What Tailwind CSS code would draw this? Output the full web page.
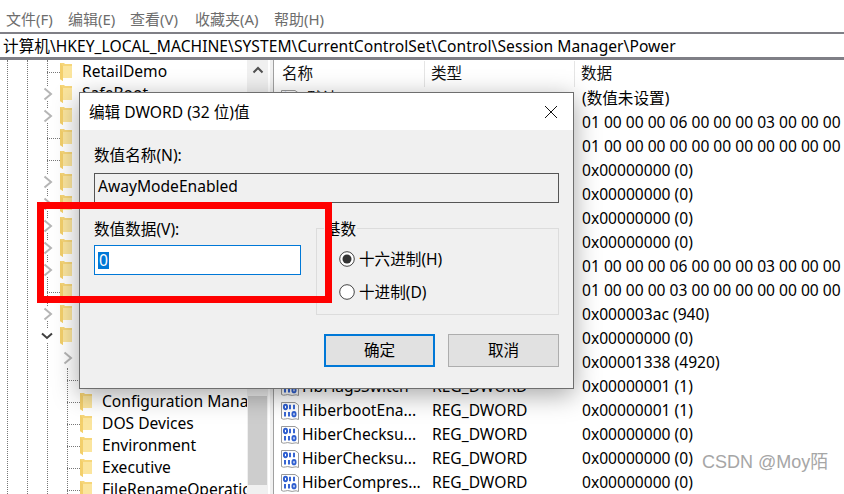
<!DOCTYPE html>
<html lang="zh-CN">
<head>
<meta charset="utf-8">
<script src="https://cdn.jsdelivr.net/npm/@tailwindcss/browser@4"></script>
</head>
<body class="bg-white">
<svg width="0" height="0" class="absolute">
  <symbol id="fd" viewBox="0 0 12 18">
    <path d="M0 0H4L5 1H12V15H3V18L0 16Z" fill="#f6d67a"/>
    <path d="M3 3H12V15H3Z" fill="#fbe59e"/>
    <path d="M0 0L3 3V18L0 16Z" fill="#f3cf6b"/>
  </symbol>
  <symbol id="rg" viewBox="0 0 20 20">
    <path d="M1.500 1.500H15L18.500 4V18.500C15 16.500 13 19.500 10 18C7 16.500 4 19.500 1.500 17.500Z" fill="#fff" stroke="#9a9a9a"/>
    <g fill="none" stroke="#2f5fd0" stroke-width="1.900">
      <ellipse cx="5.500" cy="6" rx="1.600" ry="2.200"/>
      <path d="M10 3.800V8.200M14 3.800V8.200M5 11V15.500M9 11V15.500"/>
      <ellipse cx="14" cy="13.200" rx="1.600" ry="2.200"/>
    </g>
  </symbol>
  <symbol id="cr" viewBox="0 0 12 14"><path d="M2.500 1.500L9 7L2.500 12.500" fill="none" stroke="#b5b5b5" stroke-width="2"/></symbol>
</svg>
<div class="relative w-[844px] h-[494px] overflow-hidden flex flex-col text-[15.600px] text-black bg-white font-['Noto_Sans','Noto_Sans_CJK_SC',sans-serif]">
  <nav class="h-[32px] shrink-0 flex items-center pt-[6px] text-[#6d6d6d] text-[15px] pl-[6px]">
    <span class="w-[62px]">文件(F)</span><span class="w-[62px]">编辑(E)</span><span class="w-[65px]">查看(V)</span><span class="w-[79px]">收藏夹(A)</span><span>帮助(H)</span>
  </nav>
  <div class="h-[28px] shrink-0 border-t-2 border-b-[3px] border-[#7f7f86] flex items-center pl-[3px] pt-[2px] tracking-[0.04px] whitespace-nowrap">计算机\HKEY_LOCAL_MACHINE\SYSTEM\CurrentControlSet\Control\Session Manager\Power</div>
  <main class="flex-1 flex min-h-0">
    <section class="w-[270px] shrink-0 flex">
      <div class="relative w-[247px] pt-[1px] overflow-hidden whitespace-nowrap">
        <div class="absolute left-[7px] top-0 bottom-0 border-l border-dotted border-[#777]"></div>
        <div class="absolute left-[27px] top-0 bottom-0 border-l border-dotted border-[#777]"></div>
        <div class="absolute left-[47px] top-0 bottom-0 border-l border-dotted border-[#777]"></div>
        <div class="absolute left-[67px] top-[308px] bottom-0 border-l border-dotted border-[#777]"></div>

        <div class="relative h-[22px] flex items-center pl-[47px]"><span class="shrink-0 w-[13px] border-t border-dotted border-[#777]"></span><svg class="shrink-0 w-[12px] h-[18px]"><use href="#fd"/></svg><span class="ml-[10px]">RetailDemo</span></div>
        <div class="relative h-[22px] flex items-center pl-[42px]"><svg class="shrink-0 w-[12px] h-[14px] mr-[6px] bg-white"><use href="#cr"/></svg><svg class="shrink-0 w-[12px] h-[18px]"><use href="#fd"/></svg><span class="ml-[10px]">SafeBoot</span></div>
        <div class="relative h-[22px] flex items-center pl-[42px]"><svg class="shrink-0 w-[12px] h-[14px] mr-[6px] bg-white"><use href="#cr"/></svg><svg class="shrink-0 w-[12px] h-[18px]"><use href="#fd"/></svg></div>
        <div class="relative h-[22px] flex items-center pl-[47px]"><span class="shrink-0 w-[13px] border-t border-dotted border-[#777]"></span><svg class="shrink-0 w-[12px] h-[18px]"><use href="#fd"/></svg></div>
        <div class="relative h-[22px] flex items-center pl-[47px]"><span class="shrink-0 w-[13px] border-t border-dotted border-[#777]"></span><svg class="shrink-0 w-[12px] h-[18px]"><use href="#fd"/></svg></div>
        <div class="relative h-[22px] flex items-center pl-[42px]"><svg class="shrink-0 w-[12px] h-[14px] mr-[6px] bg-white"><use href="#cr"/></svg><svg class="shrink-0 w-[12px] h-[18px]"><use href="#fd"/></svg></div>
        <div class="relative h-[22px] flex items-center pl-[42px]"><svg class="shrink-0 w-[12px] h-[14px] mr-[6px] bg-white"><use href="#cr"/></svg><svg class="shrink-0 w-[12px] h-[18px]"><use href="#fd"/></svg></div>
        <div class="relative h-[22px] flex items-center pl-[42px]"><svg class="shrink-0 w-[12px] h-[14px] mr-[6px] bg-white"><use href="#cr"/></svg><svg class="shrink-0 w-[12px] h-[18px]"><use href="#fd"/></svg></div>
        <div class="relative h-[22px] flex items-center pl-[42px]"><svg class="shrink-0 w-[12px] h-[14px] mr-[6px] bg-white"><use href="#cr"/></svg><svg class="shrink-0 w-[12px] h-[18px]"><use href="#fd"/></svg></div>
        <div class="relative h-[22px] flex items-center pl-[42px]"><svg class="shrink-0 w-[12px] h-[14px] mr-[6px] bg-white"><use href="#cr"/></svg><svg class="shrink-0 w-[12px] h-[18px]"><use href="#fd"/></svg></div>
        <div class="relative h-[22px] flex items-center pl-[47px]"><span class="shrink-0 w-[13px] border-t border-dotted border-[#777]"></span><svg class="shrink-0 w-[12px] h-[18px]"><use href="#fd"/></svg></div>
        <div class="relative h-[22px] flex items-center pl-[42px]"><svg class="shrink-0 w-[12px] h-[14px] mr-[6px] bg-white"><use href="#cr"/></svg><svg class="shrink-0 w-[12px] h-[18px]"><use href="#fd"/></svg></div>
        <div class="relative h-[22px] flex items-center pl-[41px]"><svg class="shrink-0 w-[12px] h-[14px] mr-[7px] bg-white" viewBox="0 0 12 14"><path d="M1 4.500L6 9L11 4.500" fill="none" stroke="#404040" stroke-width="2"/></svg><svg class="shrink-0 w-[12px] h-[18px]"><use href="#fd"/></svg></div>
        <div class="relative h-[22px] flex items-center pl-[62px]"><svg class="shrink-0 w-[12px] h-[14px] bg-white"><use href="#cr"/></svg></div>
        <div class="relative h-[22px] flex items-center pl-[67px]"><span class="shrink-0 w-[13px] border-t border-dotted border-[#777]"></span><svg class="shrink-0 w-[12px] h-[18px]"><use href="#fd"/></svg><span class="ml-[10px]">AppCompatCache</span></div>
        <div class="relative h-[22px] flex items-center pl-[67px]"><span class="shrink-0 w-[13px] border-t border-dotted border-[#777]"></span><svg class="shrink-0 w-[12px] h-[18px]"><use href="#fd"/></svg><span class="ml-[10px]">Configuration Manager</span></div>
        <div class="relative h-[22px] flex items-center pl-[67px]"><span class="shrink-0 w-[13px] border-t border-dotted border-[#777]"></span><svg class="shrink-0 w-[12px] h-[18px]"><use href="#fd"/></svg><span class="ml-[10px]">DOS Devices</span></div>
        <div class="relative h-[22px] flex items-center pl-[67px]"><span class="shrink-0 w-[13px] border-t border-dotted border-[#777]"></span><svg class="shrink-0 w-[12px] h-[18px]"><use href="#fd"/></svg><span class="ml-[10px]">Environment</span></div>
        <div class="relative h-[22px] flex items-center pl-[67px]"><span class="shrink-0 w-[13px] border-t border-dotted border-[#777]"></span><svg class="shrink-0 w-[12px] h-[18px]"><use href="#fd"/></svg><span class="ml-[10px]">Executive</span></div>
        <div class="relative h-[22px] flex items-center pl-[67px]"><span class="shrink-0 w-[13px] border-t border-dotted border-[#777]"></span><svg class="shrink-0 w-[12px] h-[18px]"><use href="#fd"/></svg><span class="ml-[10px]">FileRenameOperations</span></div>
      </div>
      <div class="w-[21px] bg-[#f0f0f0] flex flex-col items-center">
        <svg class="w-[12px] h-[8px] mt-[6px]" viewBox="0 0 12 8"><path d="M1.500 6.500L6 2L10.500 6.500" fill="none" stroke="#505050" stroke-width="2"/></svg>
        <div class="w-[19px] h-[89px] mt-[322px] bg-[#cdcdcd]"></div>
      </div>
      <div class="w-[2px]"></div>
    </section>
    <div class="w-[4px] shrink-0 bg-[#f0f0f0] border-r border-[#a0a0a0]"></div>
    <section class="flex-1 min-w-0 pt-[1px] whitespace-nowrap">
      <div class="h-[26px] flex items-center text-[#111]">
        <div class="w-[151px] pl-[8px] border-r border-[#e5e5e5] h-full flex items-center">名称</div>
        <div class="w-[150px] pl-[6px] border-r border-[#e5e5e5] h-full flex items-center">类型</div>
        <div class="pl-[6px]">数据</div>
      </div>
      <div class="h-[24px] grid grid-cols-[151px_150px_1fr] items-center"><div class="flex items-center pl-[6px] gap-[2px]"><svg class="w-[20px] h-[20px]"><use href="#rg"/></svg>(默认)</div><div class="pl-[7px]">REG_SZ</div><div class="pl-[7px]">(数值未设置)</div></div>
      <div class="h-[24px] grid grid-cols-[151px_150px_1fr] items-center"><div></div><div></div><div class="pl-[7px] overflow-hidden">01 00 00 00 06 00 00 00 03 00 00 00 00 00</div></div>
      <div class="h-[24px] grid grid-cols-[151px_150px_1fr] items-center"><div></div><div></div><div class="pl-[7px] overflow-hidden">01 00 00 00 00 00 00 00 00 00 00 00 00 00</div></div>
      <div class="h-[24px] grid grid-cols-[151px_150px_1fr] items-center"><div></div><div></div><div class="pl-[7px]">0x00000000 (0)</div></div>
      <div class="h-[24px] grid grid-cols-[151px_150px_1fr] items-center"><div></div><div></div><div class="pl-[7px]">0x00000000 (0)</div></div>
      <div class="h-[24px] grid grid-cols-[151px_150px_1fr] items-center"><div></div><div></div><div class="pl-[7px]">0x00000000 (0)</div></div>
      <div class="h-[24px] grid grid-cols-[151px_150px_1fr] items-center"><div></div><div></div><div class="pl-[7px]">0x00000000 (0)</div></div>
      <div class="h-[24px] grid grid-cols-[151px_150px_1fr] items-center"><div></div><div></div><div class="pl-[7px] overflow-hidden">01 00 00 00 06 00 00 00 03 00 00 00 00 00</div></div>
      <div class="h-[24px] grid grid-cols-[151px_150px_1fr] items-center"><div></div><div></div><div class="pl-[7px] overflow-hidden">01 00 00 00 03 00 00 00 00 00 00 00 00 00</div></div>
      <div class="h-[24px] grid grid-cols-[151px_150px_1fr] items-center"><div></div><div></div><div class="pl-[7px]">0x000003ac (940)</div></div>
      <div class="h-[24px] grid grid-cols-[151px_150px_1fr] items-center"><div></div><div></div><div class="pl-[7px]">0x00000000 (0)</div></div>
      <div class="h-[24px] grid grid-cols-[151px_150px_1fr] items-center"><div></div><div></div><div class="pl-[7px]">0x00001338 (4920)</div></div>
      <div class="h-[24px] grid grid-cols-[151px_150px_1fr] items-center"><div class="flex items-center pl-[6px] gap-[2px]"><svg class="w-[20px] h-[20px]"><use href="#rg"/></svg>HbFlagsSwitch</div><div class="pl-[7px]">REG_DWORD</div><div class="pl-[7px]">0x00000001 (1)</div></div>
      <div class="h-[24px] grid grid-cols-[151px_150px_1fr] items-center"><div class="flex items-center pl-[6px] gap-[2px]"><svg class="w-[20px] h-[20px]"><use href="#rg"/></svg>HiberbootEna...</div><div class="pl-[7px]">REG_DWORD</div><div class="pl-[7px]">0x00000001 (1)</div></div>
      <div class="h-[24px] grid grid-cols-[151px_150px_1fr] items-center"><div class="flex items-center pl-[6px] gap-[2px]"><svg class="w-[20px] h-[20px]"><use href="#rg"/></svg>HiberChecksu...</div><div class="pl-[7px]">REG_DWORD</div><div class="pl-[7px]">0x00000000 (0)</div></div>
      <div class="h-[24px] grid grid-cols-[151px_150px_1fr] items-center"><div class="flex items-center pl-[6px] gap-[2px]"><svg class="w-[20px] h-[20px]"><use href="#rg"/></svg>HiberChecksu...</div><div class="pl-[7px]">REG_DWORD</div><div class="pl-[7px]">0x00000000 (0)</div></div>
      <div class="h-[24px] grid grid-cols-[151px_150px_1fr] items-center"><div class="flex items-center pl-[6px] gap-[2px]"><svg class="w-[20px] h-[20px]"><use href="#rg"/></svg>HiberCompres...</div><div class="pl-[7px]">REG_DWORD</div><div class="pl-[7px]">0x00000000 (0)</div></div>
    </section>
  </main>

  <div class="absolute left-[79px] top-[92px] w-[495px] h-[297px] flex flex-col bg-[#f0f0f0] border border-[#6e6e6e] shadow-[0_6px_24px_rgba(0,0,0,0.35)]">
    <div class="h-[37px] shrink-0 bg-white flex items-center justify-between pl-[9px] pr-[15px]">
      <span class="pt-[2px]">编辑 DWORD (32 位)值</span>
      <svg class="w-[14px] h-[14px]" viewBox="0 0 14 14"><path d="M1 1L13 13M13 1L1 13" stroke="#111" stroke-width="1"/></svg>
    </div>
    <div class="flex-1 flex flex-col pt-[15px] pl-[14px] pr-[14px]">
      <label class="h-[20px] pt-[2px] flex items-center">数值名称(N):</label>
      <div class="h-[30px] mt-[8px] border border-[#555] bg-[#f0f0f0] flex items-center pl-[3px] pb-[3px]">AwayModeEnabled</div>
      <div class="mt-[16px] flex gap-[15px]">
        <div class="w-[207px]">
          <label class="h-[20px] pt-[2px] flex items-center">数值数据(V):</label>
          <div class="h-[30px] mt-[6px] border border-[#0078d7] bg-white flex items-center pl-[3px]"><span class="bg-[#0078d7] text-white px-[1px] leading-[17px]">0</span></div>
        </div>
        <div class="relative w-[243px] h-[87px] mt-[9px] border border-[#dcdcdc] pl-[22px] flex flex-col">
          <span class="absolute left-[7px] top-[-10px] bg-[#f0f0f0] px-[1px] leading-[20px]">基数</span>
          <div class="h-[24px] mt-[18px] flex items-center gap-[4px]"><svg class="w-[16px] h-[16px]" viewBox="0 0 16 16"><circle cx="8" cy="8" r="7.300" fill="#fff" stroke="#444"/><circle cx="8" cy="8" r="4.500" fill="#333"/></svg><span class="pt-[2px]">十六进制(H)</span></div>
          <div class="h-[24px] mt-[9px] flex items-center gap-[4px]"><svg class="w-[16px] h-[16px]" viewBox="0 0 16 16"><circle cx="8" cy="8" r="7.300" fill="#fff" stroke="#444"/></svg><span class="pt-[2px]">十进制(D)</span></div>
        </div>
      </div>
      <div class="mt-[19px] flex justify-end gap-[13px]">
        <button class="w-[111px] h-[33px] bg-[#e1e1e1] border-2 border-[#0078d7]">确定</button>
        <button class="w-[111px] h-[33px] bg-[#e1e1e1] border border-[#adadad]">取消</button>
      </div>
    </div>
  </div>

  <div class="absolute left-[37px] top-[202px] w-[295px] h-[101px] border-[7px] border-[#ff0000]"></div>
  <div class="absolute left-[702px] top-[450px] text-[18px] leading-[24px] text-[#a6a6a6] whitespace-nowrap font-['Liberation_Sans','Noto_Sans_CJK_SC',sans-serif]">CSDN @Moy陌</div>
</div>
</body>
</html>
